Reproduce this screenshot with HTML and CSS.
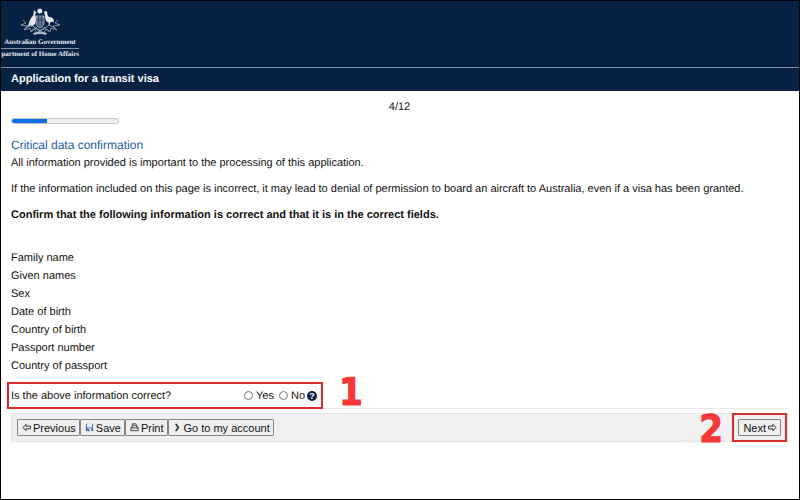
FILE: index.html
```html
<!DOCTYPE html>
<html lang="en">
<head>
    <meta charset="UTF-8">
    <meta name="viewport" content="width=device-width, initial-scale=1.0">
    <title>Application for a transit visa</title>
    <link rel="stylesheet" href="styles.css">
</head>
<body>
    <header>
        <div class="banner">
            <div class="logo">
                <svg class="crest" viewBox="0 0 40 28" aria-hidden="true">
                    <g fill="#e6ebf1">
                        <path d="M20 0l.7 1.2 1.4-.2-.3 1.3 1 .9-1.1.8.1 1.3-1.3-.3-.8 1-.7-1-1.3.2.2-1.3-1.1-.8 1.1-.8-.2-1.3 1.4.3z"/>
                        <path d="M14 2l1 1.500 1.500.8-.4 1-1 .1.6 3 .3 3.500-1 4-1.600 1.400.3 1-2.800.3-.9-1-4 2 2.400-2.800 1.300-4 1.700-3.200 1.800-2.200.4-2.200z"/>
                        <path d="M24 4l1.600-1 1.400.6.5 3.400 1.200 1.800 3 .6 2 2.200.2 2.800-2.200-1-1.700 1.400-.6 3-.9-.1.2-3.300-1.800-.6-1.400-2-.4-2.500-.6-4z"/>
                    </g>
                    <path d="M16 8h8v8q-1 3-4 4-3-1-4-4z" fill="#61738c" stroke="#c2ccd7" stroke-width=".6"/>
                    <path d="M16 12h8M18.500 8v10M21.500 8v10" stroke="#0a2344" stroke-width=".5"/>
                    <g fill="none" stroke="#8d9cae" stroke-width=".9">
                        <path d="M3 12l3 3-5 2 6 1-3 4 6-2 1 4 4-3 2 5 3-4 3 4 3-5 4 3 1-4 6 2-4-4 7-1-5-2 3-3"/>
                        <path d="M5 20l7-3 4 4 4 1 4-1 5-4 6 3M11 23l5-4 4 6 4-6 5 4"/>
                    </g>
                    <path d="M13 25q7-3 14 0l-1 2q-6-2-12 0z" fill="#aebac8"/>
                </svg>
                <span>Australian Government</span>
                <span class="department">Department of Home Affairs</span>
            </div>
        </div>
        <h1>Application for a transit visa</h1>
    </header>

    <main>
        <div class="page-count">4/12</div>
        <div class="progress" role="progressbar" aria-label="Progress" aria-valuemin="0" aria-valuemax="12" aria-valuenow="4">
            <div class="progress-fill" style="width: 33%"></div>
        </div>

        <h2>Critical data confirmation</h2>
        <p>All information provided is important to the processing of this application.</p>
        <p>If the information included on this page is incorrect, it may lead to denial of permission to board an aircraft to Australia, even if a visa has been granted.</p>
        <p><strong>Confirm that the following information is correct and that it is in the correct fields.</strong></p>

        <ul class="fields">
            <li>Family name</li>
            <li>Given names</li>
            <li>Sex</li>
            <li>Date of birth</li>
            <li>Country of birth</li>
            <li>Passport number</li>
            <li>Country of passport</li>
        </ul>

        <form>
            <div class="question-row">
                <div class="question" role="radiogroup" aria-labelledby="question">
                    <span id="question" class="question-text">Is the above information correct?</span>
                    <input type="radio" id="yes" name="correct"><label for="yes">Yes</label>
                    <input type="radio" id="no" name="correct"><label for="no">No</label>
                    <button type="button" class="help" aria-label="Help">?</button>
                </div>
                <span class="step step-one">1</span>
            </div>

            <div class="toolbar">
                <div class="buttons">
                    <button type="button">
                        <svg viewBox="0 0 10 10"><path d="M1 5l3.500-3.500v2h5v3h-5v2z" fill="none" stroke="#222"/></svg>Previous
                    </button>
                    <button type="button">
                        <svg viewBox="0 0 10 10"><path d="M1 1h8v8H1z" fill="#3c6ca8"/><path d="M2 1h6v4H2z" fill="#e8f1fb"/><path d="M3 6h4v3H3z" fill="#fff"/><path d="M3 7h2v2H3z" fill="#24466f"/></svg>Save
                    </button>
                    <button type="button">
                        <svg viewBox="0 0 10 10"><path d="M2.500 5V1h4l1 1.500V5M1 5.500h8v3H1zM1 5.500l1.500-2M9 5.500L7.500 3.500M3.500 3h3" fill="none" stroke="#333"/></svg>Print
                    </button>
                    <button type="button">
                        <svg viewBox="0 0 10 10"><path d="M3 1l3 4-3 4" fill="none" stroke="#222" stroke-width="1.700"/></svg>Go to my account
                    </button>
                </div>
                <div class="next">
                    <span class="step step-two">2</span>
                    <button type="button">Next
                        <svg viewBox="0 0 10 10"><path d="M9 5L5.500 1.500v2h-5v3h5v2z" fill="none" stroke="#222"/></svg>
                    </button>
                </div>
            </div>
        </form>
    </main>
</body>
</html>
```

FILE: styles.css
```css
* {
    box-sizing: border-box;
}

body {
    margin: 0;
    min-height: 100vh;
    border: 1px solid #000;
    background-color: #fff;
    color: #111;
    font-family: "Liberation Sans", Arial, sans-serif;
    font-size: 11px;
    line-height: 18px;
    text-rendering: geometricPrecision;
}

header {
    background-color: #072142;
    color: #fff;
}

.banner {
    padding: 7px 0;
    border-bottom: 1px solid #8794a6;
}

/* the logo runs off the left edge of the page */
.logo {
    display: flex;
    flex-direction: column;
    align-items: center;
    width: 78px;
    overflow: hidden;
    color: #e4e9f0;
    font-family: "Liberation Serif", "Times New Roman", serif;
    font-size: 7px;
    font-weight: bold;
    line-height: 12px;
    white-space: nowrap;
}

.crest {
    width: 40px;
    height: 28px;
}

.department {
    display: flex;
    justify-content: flex-end;
    width: 100%;
    border-top: 1px solid #8794a6;
    line-height: 11px;
}

h1 {
    margin: 0;
    padding: 0 10px;
    font-size: 11px;
    line-height: 23px;
}

main {
    padding: 7px 11px 0 10px;
}

.page-count {
    text-align: center;
}

.progress {
    width: 108px;
    height: 6px;
    margin-top: 2px;
    border: 1px solid #c6c6c6;
    border-radius: 3px;
    background-color: #efefef;
    overflow: hidden;
}

.progress-fill {
    height: 100%;
    background-color: #0b70e5;
}

h2 {
    margin: 13px 0 0;
    color: #22609f;
    font-size: 12px;
    font-weight: normal;
    line-height: 17px;
}

p {
    margin: 0 0 8px;
}

.fields {
    margin: 25px 0 7px;
    padding: 0;
    list-style: none;
}

.question-row {
    position: relative;
    display: flex;
    border-bottom: 1px solid #e9e9e9;
}

.question {
    display: flex;
    align-items: center;
    width: 316px;
    height: 27px;
    margin: 0 0 -1px -4px;
    padding: 0 4px 0 2px;
    border: 2px solid #d92b2b;
}

.question-text {
    flex: 1;
}

.question input {
    appearance: none;
    width: 9px;
    height: 9px;
    margin: 0 3px 0 5px;
    border: 1px solid #777;
    border-radius: 50%;
    background-color: #fff;
}

.help {
    width: 10px;
    height: 10px;
    margin-left: 2px;
    padding: 0;
    border: none;
    border-radius: 50%;
    background-color: #072142;
    color: #fff;
    font-family: inherit;
    font-size: 9px;
    font-weight: bold;
    line-height: 10px;
}

.toolbar {
    display: flex;
    justify-content: space-between;
    align-items: center;
    height: 29px;
    margin-top: 4px;
    padding-left: 5px;
    border: 1px solid #e2e4e6;
    background-color: #f0f0f0;
}

.buttons {
    display: flex;
}

.toolbar button {
    display: flex;
    align-items: center;
    gap: 2px;
    height: 17px;
    padding: 0 3px 0 4px;
    border: 1px solid #858585;
    border-radius: 1px;
    background-color: #efefef;
    color: #111;
    font-family: inherit;
    font-size: 11px;
}

.toolbar svg {
    width: 9px;
    height: 9px;
}

.next {
    position: relative;
    padding: 4px;
    border: 2px solid #d92b2b;
}

/* step numbers drawn over the form */
.step {
    position: absolute;
    color: #f53737;
    font-family: "DejaVu Sans Condensed", "DejaVu Sans", sans-serif;
    font-size: 38px;
    font-weight: bold;
    line-height: 38px;
    -webkit-text-stroke: 1px #f53737;
}

.step-one {
    top: -9px;
    left: 328px;
}

.step-two {
    top: -5px;
    right: 62px;
}
```
